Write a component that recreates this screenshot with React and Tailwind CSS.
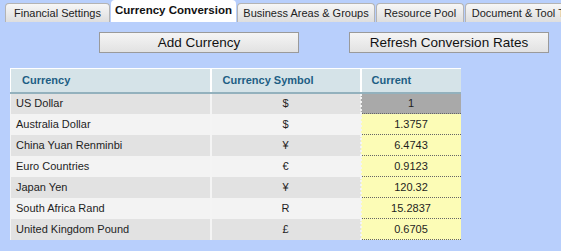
import React from "react";

const tabs = [
  { label: "Financial Settings", w: "w-[105px]" },
  { label: "Currency Conversion", w: "w-[125px]", active: true },
  { label: "Business Areas & Groups", w: "w-[138px]" },
  { label: "Resource Pool", w: "w-[88px]" },
  { label: "Document & Tool Templates", w: "w-[150px]" },
];

const rates = [
  { name: "US Dollar", symbol: "$", rate: "1", base: true },
  { name: "Australia Dollar", symbol: "$", rate: "1.3757" },
  { name: "China Yuan Renminbi", symbol: "¥", rate: "6.4743" },
  { name: "Euro Countries", symbol: "€", rate: "0.9123" },
  { name: "Japan Yen", symbol: "¥", rate: "120.32" },
  { name: "South Africa Rand", symbol: "R", rate: "15.2837" },
  { name: "United Kingdom Pound", symbol: "£", rate: "0.6705" },
];

export default function App() {
  return (
    <div className="w-[561px] h-[251px] overflow-hidden bg-[#b8cffc] font-['Liberation_Sans',Arial,sans-serif] text-[#1e1e1e]">
      {/* tabs */}
      <div className="flex items-end gap-[1px] pl-[5px] h-[22px] overflow-hidden whitespace-nowrap">
        {tabs.map((t) =>
          t.active ? (
            <div
              key={t.label}
              className={`${t.w} shrink-0 h-[22px] bg-white rounded-t-[4px] flex items-center justify-center text-[11.5px] font-bold text-[#111]`}
            >
              {t.label}
            </div>
          ) : (
            <div
              key={t.label}
              className={`${t.w} shrink-0 h-[19px] bg-gradient-to-b from-[#f7f7f7] to-[#dedede] border border-b-0 border-[#b4b4b4] rounded-t-[4px] flex items-center justify-center text-[11px] text-[#222] overflow-hidden`}
            >
              {t.label}
            </div>
          )
        )}
      </div>

      {/* buttons */}
      <div className="flex mt-[10px] pl-[99px] gap-[50px]">
        <button className="w-[200px] h-[21px] border border-[#9a9a9a] bg-gradient-to-b from-[#f5f5f5] to-[#e2e2e2] text-[13.5px] text-[#111] leading-none">
          Add Currency
        </button>
        <button className="w-[200px] h-[21px] border border-[#9a9a9a] bg-gradient-to-b from-[#f5f5f5] to-[#e2e2e2] text-[13.5px] text-[#111] leading-none">
          Refresh Conversion Rates
        </button>
      </div>

      {/* table */}
      <table className="mt-[15px] ml-[10px] w-[450px] border-collapse text-[11px] table-fixed">
        <colgroup>
          <col className="w-[200px]" />
          <col className="w-[150px]" />
          <col className="w-[100px]" />
        </colgroup>
        <thead>
          <tr className="h-[24px] bg-[#d5e3e8] text-[#1d5e84] font-bold">
            <th className="text-left pl-[11px] border-t border-l border-white border-b-2 border-b-[#93b1bd]">Currency</th>
            <th className="text-left pl-[11px] border-t border-l-2 border-white border-b-2 border-b-[#93b1bd]">Currency Symbol</th>
            <th className="text-left pl-[10px] border-t border-l-2 border-white border-b-2 border-b-[#93b1bd]">Current</th>
          </tr>
        </thead>
        <tbody>
          {rates.map((r, i) => (
            <tr key={r.name} className={`h-[21px] ${i % 2 === 0 ? "bg-[#e2e2e2]" : "bg-[#f3f3f3]"}`}>
              <td className="pl-[5px] border-l border-[#f4f4f4]">{r.name}</td>
              <td className="text-center border-l-2 border-[#f4f4f4]">{r.symbol}</td>
              <td
                className={`text-center border-l-2 border-[#f4f4f4] border-b border-dotted border-b-[#666] ${
                  r.base ? "bg-[#a9a9a9]" : "bg-[#fcfcb6]"
                }`}
              >
                {r.rate}
              </td>
            </tr>
          ))}
        </tbody>
      </table>
    </div>
  );
}
